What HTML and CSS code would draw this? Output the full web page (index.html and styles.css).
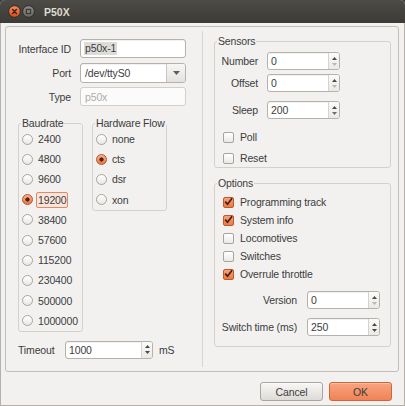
FILE: index.html
```html
<!DOCTYPE html>
<html>
<head>
<meta charset="utf-8">
<title>P50X</title>
<link rel="stylesheet" href="styles.css">
</head>
<body>
<div class="window">
  <div class="titlebar">
    <span class="wbtn">
      <svg width="13" height="13" viewBox="0 0 13 13"><defs><linearGradient id="cg" x1="0" y1="0" x2="0" y2="1"><stop offset="0" stop-color="#f58d60"/><stop offset="1" stop-color="#dd4b18"/></linearGradient></defs><circle cx="6.5" cy="6.5" r="5.8" fill="url(#cg)" stroke="#2b2a27" stroke-width="0.9"/><path d="M4.6 4.6l3.8 3.8M8.4 4.6l-3.8 3.8" stroke="#3a1a0b" stroke-width="1.4" stroke-linecap="round"/></svg>
    </span>
    <span class="wbtn">
      <svg width="13" height="13" viewBox="0 0 13 13"><defs><linearGradient id="mg" x1="0" y1="0" x2="0" y2="1"><stop offset="0" stop-color="#8f8d88"/><stop offset="1" stop-color="#6a6863"/></linearGradient></defs><circle cx="6.5" cy="6.5" r="5.8" fill="url(#mg)" stroke="#2b2a27" stroke-width="0.9"/><rect x="4.4" y="4.4" width="4.2" height="4.2" fill="none" stroke="#3a3935" stroke-width="1.2"/></svg>
    </span>
    <span class="title">P50X</span>
  </div>
  <div class="client">
    <div class="frame">
      <div class="left">
        <div class="form">
          <span class="flbl">Interface ID</span>
          <div class="field"><span class="sel">p50x-1</span></div>
          <span class="flbl">Port</span>
          <div class="field combo"><span class="cval">/dev/ttyS0</span><span class="drop"><svg width="7" height="4" viewBox="0 0 7 4"><path d="M0 0h7L3.5 4z" fill="#5f5d59"/></svg></span></div>
          <span class="flbl">Type</span>
          <div class="field disabled">p50x</div>
        </div>
        <div class="groups">
          <fieldset class="group baud">
            <legend>Baudrate</legend>
            <div class="radio"><span class="rb"></span><span>2400</span></div>
            <div class="radio"><span class="rb"></span><span>4800</span></div>
            <div class="radio"><span class="rb"></span><span>9600</span></div>
            <div class="radio"><span class="rb on"></span><span class="focus">19200</span></div>
            <div class="radio"><span class="rb"></span><span>38400</span></div>
            <div class="radio"><span class="rb"></span><span>57600</span></div>
            <div class="radio"><span class="rb"></span><span>115200</span></div>
            <div class="radio"><span class="rb"></span><span>230400</span></div>
            <div class="radio"><span class="rb"></span><span>500000</span></div>
            <div class="radio"><span class="rb"></span><span>1000000</span></div>
          </fieldset>
          <fieldset class="group flow">
            <legend>Hardware Flow</legend>
            <div class="radio"><span class="rb"></span><span>none</span></div>
            <div class="radio"><span class="rb on"></span><span>cts</span></div>
            <div class="radio"><span class="rb"></span><span>dsr</span></div>
            <div class="radio"><span class="rb"></span><span>xon</span></div>
          </fieldset>
        </div>
        <div class="timeout">
          <span class="tlbl">Timeout</span>
          <div class="spin wide"><span class="sval">1000</span><span class="arrows"><svg width="5" height="3" viewBox="0 0 5 3"><path d="M0 3h5L2.5 0z" fill="#4a4946"/></svg><svg width="5" height="3" viewBox="0 0 5 3"><path d="M0 0h5L2.5 3z" fill="#4a4946"/></svg></span></div>
          <span class="unit">mS</span>
        </div>
      </div>
      <div class="divider"></div>
      <div class="right">
        <fieldset class="group sensors">
          <legend>Sensors</legend>
          <div class="frow first"><span class="slbl">Number</span><div class="spin"><span class="sval">0</span><span class="arrows"><svg width="5" height="3" viewBox="0 0 5 3"><path d="M0 3h5L2.5 0z" fill="#4a4946"/></svg><svg width="5" height="3" viewBox="0 0 5 3"><path d="M0 0h5L2.5 3z" fill="#b9b6b2"/></svg></span></div></div>
          <div class="frow"><span class="slbl">Offset</span><div class="spin"><span class="sval">0</span><span class="arrows"><svg width="5" height="3" viewBox="0 0 5 3"><path d="M0 3h5L2.5 0z" fill="#4a4946"/></svg><svg width="5" height="3" viewBox="0 0 5 3"><path d="M0 0h5L2.5 3z" fill="#b9b6b2"/></svg></span></div></div>
          <div class="frow sleep"><span class="slbl">Sleep</span><div class="spin"><span class="sval">200</span><span class="arrows"><svg width="5" height="3" viewBox="0 0 5 3"><path d="M0 3h5L2.5 0z" fill="#4a4946"/></svg><svg width="5" height="3" viewBox="0 0 5 3"><path d="M0 0h5L2.5 3z" fill="#6e6c68"/></svg></span></div></div>
          <div class="check poll"><span class="cb"></span><span>Poll</span></div>
          <div class="check reset"><span class="cb"></span><span>Reset</span></div>
        </fieldset>
        <fieldset class="group options">
          <legend>Options</legend>
          <div class="check first"><span class="cb on"><svg width="11" height="11" viewBox="0 0 11 11"><path d="M2.2 5.6l2.3 2.6 4.6-6" fill="none" stroke="#4a1d09" stroke-width="1.7"/></svg></span><span>Programming track</span></div>
          <div class="check"><span class="cb on"><svg width="11" height="11" viewBox="0 0 11 11"><path d="M2.2 5.6l2.3 2.6 4.6-6" fill="none" stroke="#4a1d09" stroke-width="1.7"/></svg></span><span>System info</span></div>
          <div class="check"><span class="cb"></span><span>Locomotives</span></div>
          <div class="check"><span class="cb"></span><span>Switches</span></div>
          <div class="check"><span class="cb on"><svg width="11" height="11" viewBox="0 0 11 11"><path d="M2.2 5.6l2.3 2.6 4.6-6" fill="none" stroke="#4a1d09" stroke-width="1.7"/></svg></span><span>Overrule throttle</span></div>
          <div class="orow version"><span class="olbl">Version</span><div class="spin"><span class="sval">0</span><span class="arrows"><svg width="5" height="3" viewBox="0 0 5 3"><path d="M0 3h5L2.5 0z" fill="#4a4946"/></svg><svg width="5" height="3" viewBox="0 0 5 3"><path d="M0 0h5L2.5 3z" fill="#b9b6b2"/></svg></span></div></div>
          <div class="orow switch"><span class="olbl">Switch time (ms)</span><div class="spin"><span class="sval">250</span><span class="arrows"><svg width="5" height="3" viewBox="0 0 5 3"><path d="M0 3h5L2.5 0z" fill="#4a4946"/></svg><svg width="5" height="3" viewBox="0 0 5 3"><path d="M0 0h5L2.5 3z" fill="#4a4946"/></svg></span></div></div>
        </fieldset>
      </div>
    </div>
    <div class="buttons">
      <button class="btn">Cancel</button>
      <button class="btn ok">OK</button>
    </div>
  </div>
</div>
</body>
</html>
```
FILE: styles.css
```css
* { box-sizing: border-box; }
html, body { margin: 0; padding: 0; }
body {
  width: 405px;
  height: 406px;
  overflow: hidden;
  background: #3c3b37;
  font-family: "Liberation Sans", Arial, sans-serif;
  font-size: 10.5px;
  letter-spacing: -0.15px;
  color: #3c3c3c;
}
.window {
  width: 405px;
  height: 406px;
  display: flex;
  flex-direction: column;
  background: #f2f1f0;
  border-radius: 5px 5px 0 0;
  overflow: hidden;
}
.titlebar {
  height: 23px;
  flex: none;
  display: flex;
  align-items: center;
  padding-left: 8px;
  background: linear-gradient(#4c4b46, #3c3b37);
}
.wbtn { display: block; width: 13px; height: 13px; }
.wbtn + .wbtn { margin-left: 1px; }
.wbtn svg { display: block; }
.title {
  margin-left: 9px;
  color: #dfdbd2;
  font-weight: bold;
  font-size: 10.5px;
  letter-spacing: 0;
}
.client {
  flex: 1;
  display: flex;
  flex-direction: column;
  border: 1px solid #b4b1ac;
  border-top: none;
  padding: 3px 5px 0 4px;
}
.frame {
  height: 346px;
  flex: none;
  display: flex;
  border: 1px solid #c2beb9;
  border-radius: 3px;
}
.left { width: 196px; flex: none; padding-top: 12px; }
.divider { width: 1px; flex: none; background: #d8d5d1; margin: 4px 0; }
.right { flex: 1; padding: 8px 0 0 11px; }

/* form */
.form {
  display: grid;
  grid-template-columns: 65px 106px;
  grid-template-rows: 19px 20px 19px;
  column-gap: 9px;
  row-gap: 4.5px;
  align-items: center;
}
.flbl { text-align: right; white-space: nowrap; }
.field {
  height: 100%;
  display: flex;
  align-items: center;
  padding-left: 3px;
  background: #fff;
  border: 1px solid #b5b1ac;
  border-radius: 3px;
  box-shadow: inset 0 1px 1px rgba(0,0,0,0.06);
}
.sel { background: #dedcd8; padding: 1px 1px; line-height: 11px; }
.combo { padding-left: 0; }
.cval { flex: 1; padding-left: 4px; }
.drop {
  width: 19px;
  height: 100%;
  display: flex;
  align-items: center;
  justify-content: center;
  border-left: 1px solid #c9c6c1;
  background: linear-gradient(#f7f6f5, #e4e2df);
  border-radius: 0 2px 2px 0;
}
.drop svg { display: block; }
.disabled {
  padding-left: 4px;
  color: #aeaba7;
  background: #fbfbfb;
  border-color: #d2cfcb;
  box-shadow: none;
}

/* groups */
.groups {
  display: flex;
  align-items: flex-start;
  gap: 9px;
  margin: 11px 0 0 12px;
}
fieldset.group {
  margin: 0;
  padding: 0;
  min-width: 0;
  border: 1px solid #d4d1cd;
  border-radius: 3px;
}
fieldset.group legend {
  margin-left: 2px;
  padding: 0 1px;
  line-height: 12px;
  color: #3c3c3c;
}
.baud { width: 65px; }
.flow { width: 75px; }
.radio {
  display: flex;
  align-items: center;
  height: 20.2px;
  padding-left: 3px;
  white-space: nowrap;
}
.rb {
  width: 11px;
  height: 11px;
  flex: none;
  margin-right: 5px;
  border-radius: 50%;
  border: 1px solid #a8a5a0;
  background: linear-gradient(#ffffff, #e9e7e4);
}
.rb.on {
  border-color: #b6542a;
  background: radial-gradient(circle, #55210b 0, #55210b 1.8px, transparent 2.4px), linear-gradient(#f8b495, #ea7744);
}
.focus {
  margin-left: -2px;
  padding: 1px 1px;
  line-height: 12px;
  border: 1px solid #e8875c;
  border-radius: 2px;
  background: #fbe5dc;
}

/* timeout */
.timeout {
  display: flex;
  align-items: center;
  height: 18px;
  margin: 9px 0 0 12px;
}
.tlbl { width: 47px; flex: none; }
.unit { margin-left: 6px; }

/* spin */
.spin {
  width: 73px;
  height: 18px;
  flex: none;
  display: flex;
  background: #fff;
  border: 1px solid #b5b1ac;
  border-radius: 3px;
  box-shadow: inset 0 1px 1px rgba(0,0,0,0.06);
}
.spin.wide { width: 88px; }
.sval { flex: 1; display: flex; align-items: center; padding-left: 3px; }
.arrows {
  width: 11px;
  flex: none;
  display: flex;
  flex-direction: column;
  align-items: center;
  justify-content: center;
  gap: 3px;
  border-left: 1px solid #d6d3cf;
  background: linear-gradient(#fbfbfa, #ebe9e6);
  border-radius: 0 2px 2px 0;
}
.arrows svg { display: block; }

/* right side */
.sensors, .options { width: 177px; }
.sensors { padding-bottom: 1px; }
.frow {
  display: flex;
  align-items: center;
  height: 18px;
  margin-top: 4px;
}
.frow.first { margin-top: 5px; }
.frow.sleep { margin-top: 9px; }
.slbl {
  width: 43px;
  flex: none;
  margin-right: 9px;
  display: flex;
  justify-content: flex-end;
  white-space: nowrap;
}
.check {
  display: flex;
  align-items: center;
  height: 18px;
  padding-left: 8px;
  white-space: nowrap;
}
.check.poll { margin-top: 9px; }
.check.reset { margin-top: 3px; }
.options .check.first { margin-top: 4px; }
.cb {
  width: 11px;
  height: 11px;
  flex: none;
  margin-right: 6px;
  border: 1px solid #a8a5a0;
  border-radius: 2px;
  background: linear-gradient(#ffffff, #ebe9e6);
  position: relative;
}
.cb.on {
  border-color: #c2582a;
  background: linear-gradient(#f4a27c, #eb7945);
}
.cb svg { position: absolute; left: -1px; top: -2px; }
fieldset.options { margin-top: 9px; padding-bottom: 10px; }
.orow {
  display: flex;
  align-items: center;
  height: 18px;
  padding-left: 7px;
}
.orow.version { margin-top: 8px; }
.orow.switch { margin-top: 9px; }
.olbl {
  width: 75px;
  flex: none;
  margin-right: 10px;
  display: flex;
  justify-content: flex-end;
  white-space: nowrap;
}

/* buttons */
.buttons {
  display: flex;
  justify-content: flex-end;
  gap: 6px;
  margin-top: 10px;
  padding-right: 7px;
}
.btn {
  width: 63px;
  height: 19px;
  padding: 0;
  font-family: "Liberation Sans", Arial, sans-serif;
  font-size: 10.5px;
  letter-spacing: -0.15px;
  color: #3c3c3c;
  border: 1px solid #a9a6a2;
  border-radius: 3px;
  background: linear-gradient(#f8f7f6, #dddbd7);
  box-shadow: inset 0 1px 0 rgba(255,255,255,0.6);
}
.btn.ok {
  border-color: #d06638;
  background: linear-gradient(#f7a580, #ef8355);
  box-shadow: inset 0 1px 0 rgba(255,255,255,0.3);
}
```
